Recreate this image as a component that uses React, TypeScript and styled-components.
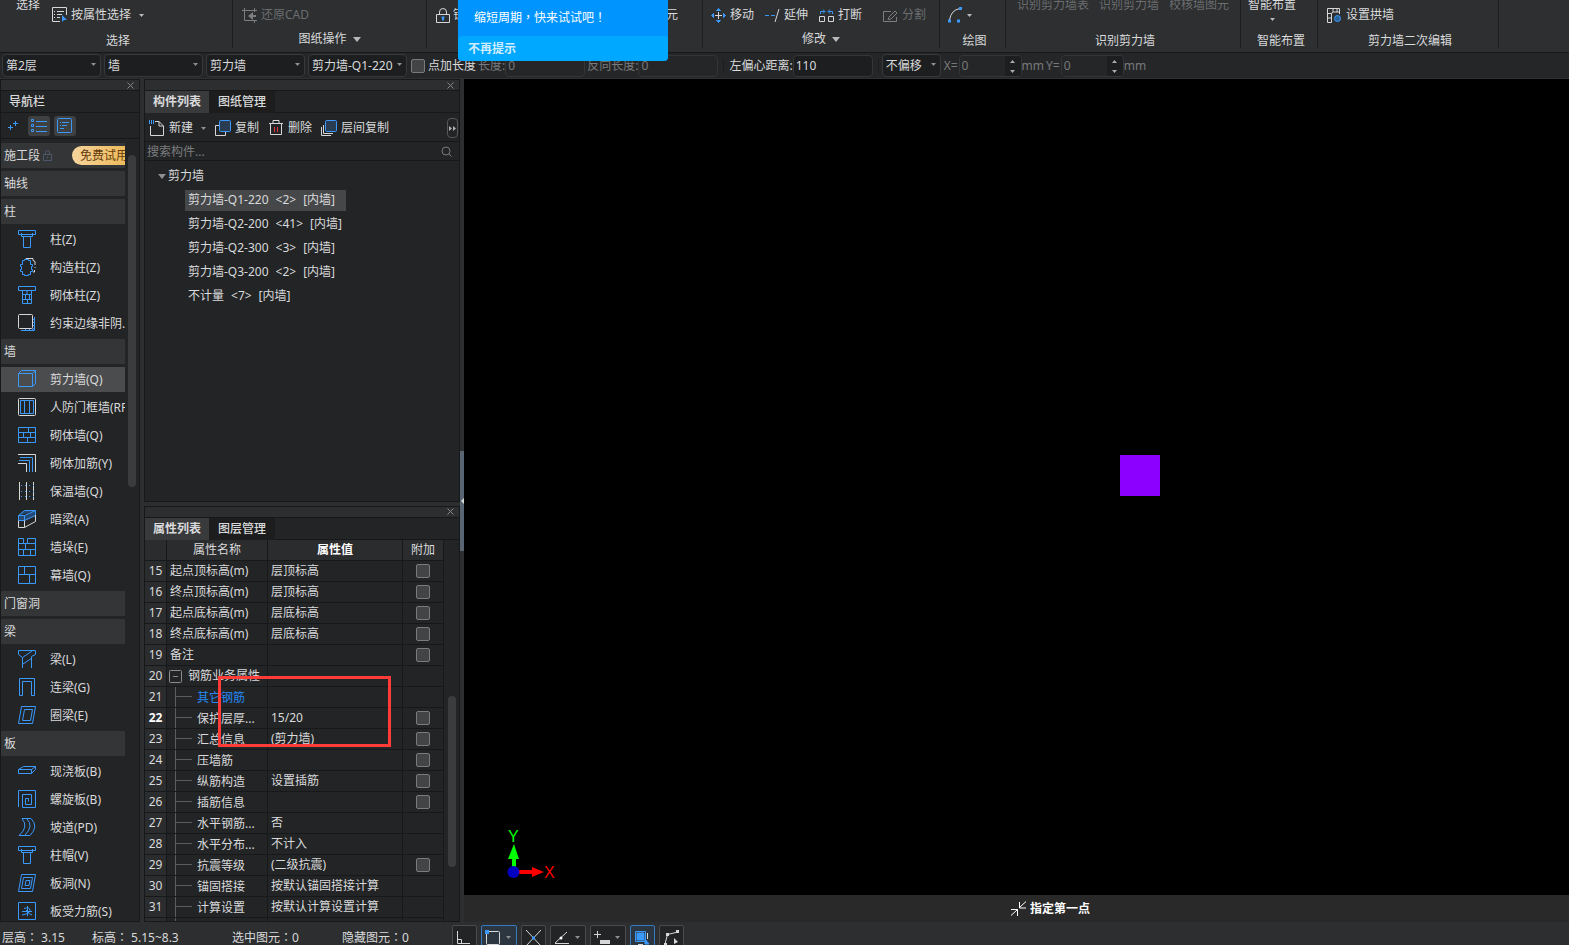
import React, { ReactNode } from 'react';
import styled, { createGlobalStyle } from 'styled-components';

const BLUE = '#3b99fc';
const LIGHT = '#d6d7d8';
const EDGE = '#17181a';

const GlobalStyle = createGlobalStyle`
  * { box-sizing: border-box; }
  body {
    margin: 0;
    background: #2d2e30;
    color: #d9dadb;
    font: 12px/18px 'Noto Sans', 'Noto Sans CJK SC', sans-serif;
    overflow: hidden;
  }
  button, input, select { font: inherit; color: inherit; margin: 0; }
  button { background: none; border: 0; padding: 0; display: flex; align-items: center; white-space: nowrap; }
  svg { display: block; flex: none; }
`;

const Page = styled.div`
  position: relative;
  display: flex;
  flex-direction: column;
  height: 100vh;
  overflow: hidden;
`;

/* Ribbon */
const Ribbon = styled.header`
  display: flex;
  align-items: flex-end;
  height: 52px;
  flex: none;
  overflow: hidden;
  background: #2d2f31;
`;
const Group = styled.section<{ $width: number }>`
  width: ${p => p.$width}px;
  flex: none;
  height: 52px;
  padding-bottom: 4px;
  display: flex;
  flex-direction: column;
  align-items: stretch;
  justify-content: flex-end;
`;
const GroupInner = styled.div`
  height: 48px;
  border-right: 1px solid #1d1e20;
  display: flex;
  flex-direction: column;
  justify-content: flex-end;
`;
const GroupBody = styled.div<{ $start?: number; $gap?: number; $center?: boolean }>`
  display: flex;
  flex: 1;
  align-items: flex-end;
  justify-content: ${p => (p.$center ? 'center' : 'flex-start')};
  gap: ${p => p.$gap ?? 10}px;
  padding-left: ${p => p.$start ?? 0}px;
  height: 28px;
`;
const Caption = styled.div<{ $menu?: boolean }>`
  display: flex;
  justify-content: center;
  align-items: center;
  gap: 6px;
  height: 18px;
  flex: none;
  padding-left: ${p => (p.$menu ? 0 : 4)}px;
  margin: ${p => (p.$menu ? '6px 0 0' : '8px 0 -2px')};
`;
const Tool = styled.button<{ $dim?: boolean; $gap?: number }>`
  gap: ${p => p.$gap ?? 4}px;
  height: 18px;
  color: ${p => (p.$dim ? '#6b6d6f' : 'inherit')};
`;
const TallTool = styled.button<{ $dim?: boolean }>`
  flex-direction: column;
  height: 28px;
  justify-content: flex-start;
  gap: 4px;
  line-height: 18px;
  color: ${p => (p.$dim ? '#6b6d6f' : 'inherit')};
`;

const Toast = styled.aside`
  position: absolute;
  z-index: 5;
  left: 458px;
  top: 0;
  width: 210px;
  border-radius: 0 0 4px 4px;
  overflow: hidden;
  background: #0094ff;
  color: #fff;
  p { margin: 0; padding: 9px 16px; font-family: 'Noto Sans', 'Noto Sans CJK TC', sans-serif; }
  button {
    width: 100%;
    height: 25px;
    padding-left: 10px;
    background: #00a8ff;
    border-radius: 4px;
    font-weight: 700;
    color: #cfecff;
  }
`;

/* Option bar */
const Options = styled.div`
  display: flex;
  align-items: center;
  height: 27px;
  flex: none;
  padding-left: 2px;
  background: #252628;
  border-top: 1px solid ${EDGE};
  border-bottom: 1px solid #303134;
  white-space: nowrap;
`;
const Picker = styled.div<{ $width: number }>`
  position: relative;
  width: ${p => p.$width}px;
  height: 23px;
  margin-right: 3px;
  select {
    appearance: none;
    width: 100%;
    height: 23px;
    padding: 0 11px 0 3px;
    border: 1px solid #38393b;
    border-radius: 4px;
    background: #1d1e20;
  }
  svg { position: absolute; right: 5px; top: 9px; }
`;
const Check = styled.input`
  appearance: none;
  width: 14px;
  height: 14px;
  flex: none;
  border: 1px solid #7a7b7d;
  border-radius: 2px;
  background: #434446;
  display: block;
`;
const CheckLabel = styled.label`
  display: flex;
  align-items: center;
  gap: 3px;
  margin: 0 2px 0 1px;
`;
const Field = styled.label<{ $dim?: boolean; $end?: number }>`
  display: flex;
  align-items: center;
  margin-right: ${p => p.$end ?? 2}px;
  color: ${p => (p.$dim ? '#77797b' : 'inherit')};
  input {
    width: 80px;
    height: 22px;
    padding: 0 2px;
    border: 1px solid #343537;
    border-radius: 4px;
    background: ${p => (p.$dim ? '#252628' : '#1d1e20')};
  }
`;
const Spin = styled.span`
  display: flex;
  height: 22px;
  width: 63px;
  margin-left: 1px;
  border: 1px solid #343537;
  border-radius: 4px;
  overflow: hidden;
  && input { width: 45px; height: 20px; padding: 0 2px; border: 0; border-radius: 0; }
  svg { background: #1d1e20; }
`;
const Rule = styled.i<{ $end: number }>`
  width: 1px;
  height: 14px;
  margin: 0 ${p => p.$end}px 0 3px;
  background: #1d1e20;
`;

/* Work area */
const Main = styled.main`
  display: flex;
  flex: 1;
  min-height: 0;
`;
const Panel = styled.section<{ $grow?: number }>`
  position: relative;
  display: flex;
  flex-direction: column;
  flex: ${p => (p.$grow ? `${p.$grow} 1 0` : 'none')};
  min-height: 0;
  overflow: hidden;
  background: #232426;
  border: 1px solid ${EDGE};
`;
const Strip = styled.div`
  display: flex;
  justify-content: flex-end;
  align-items: center;
  height: 11px;
  flex: none;
  padding-right: 4px;
  background: #2d2e30;
  border-bottom: 1px solid ${EDGE};
`;
const NavPanel = styled(Panel)`
  width: 140px;
  height: 100%;
`;
const NavTitle = styled.h2`
  margin: 0;
  height: 22px;
  flex: none;
  padding: 2px 8px 1px;
  font-size: 12px;
  font-weight: 500;
  border-bottom: 1px solid ${EDGE};
`;
const NavTools = styled.div`
  display: flex;
  align-items: center;
  gap: 4px;
  height: 26px;
  flex: none;
  padding-left: 1px;
  border-bottom: 1px solid ${EDGE};
`;
const NavTool = styled.button<{ $on?: boolean }>`
  width: 22px;
  height: 20px;
  justify-content: center;
  border-radius: 3px;
  background: ${p => (p.$on ? '#3f4042' : 'transparent')};
`;
const NavBody = styled.div`
  display: flex;
  flex: 1;
  min-height: 0;
  gap: 3px;
  padding-top: 4px;
`;
const NavList = styled.div`
  width: 124px;
  display: flex;
  flex-direction: column;
  gap: 3px;
  overflow: hidden;
`;
const NavHead = styled.button`
  height: 25px;
  flex: none;
  padding-left: 3px;
  gap: 3px;
  background: #343537;
`;
const Trial = styled.span`
  margin-left: auto;
  height: 19px;
  width: 53px;
  padding: 1px 0 0 8px;
  border-radius: 10px 0 0 10px;
  overflow: hidden;
  background: linear-gradient(90deg, #f5d49d, #eebb5c);
  color: #663c0c;
`;
const NavItem = styled.button<{ $on?: boolean }>`
  height: 25px;
  flex: none;
  padding-left: 17px;
  gap: 14px;
  overflow: hidden;
  background: ${p => (p.$on ? '#4b4c4e' : 'transparent')};
  svg { margin-bottom: 1px; }
`;
const Thumb = styled.div<{ $top: number; $height: number }>`
  width: 8px;
  height: ${p => p.$height}px;
  margin-top: ${p => p.$top}px;
  flex: none;
  border-radius: 4px;
  background: #3b3c3e;
`;

const Dock = styled.div`
  display: flex;
  flex-direction: column;
  gap: 4px;
  width: 316px;
  margin-left: 4px;
  flex: none;
`;
const Tabs = styled.div`
  display: flex;
  height: 22px;
  flex: none;
  border-bottom: 1px solid ${EDGE};
`;
const Tab = styled.button<{ $on?: boolean }>`
  height: 22px;
  width: ${p => (p.$on ? 64 : 66)}px;
  justify-content: center;
  font-weight: ${p => (p.$on ? 700 : 500)};
  background: ${p => (p.$on ? '#393a3c' : '#1d1d1d')};
`;
const PartTools = styled.div`
  display: flex;
  align-items: center;
  height: 29px;
  flex: none;
  gap: 9px;
  padding: 2px 0 0 4px;
  border-bottom: 1px solid ${EDGE};
`;
const More = styled.button`
  width: 11px;
  height: 20px;
  margin-left: auto;
  margin-right: 1px;
  justify-content: center;
  border: 1px solid #55575a;
  border-radius: 4px;
`;
const Search = styled.label`
  display: flex;
  align-items: center;
  height: 19px;
  flex: none;
  padding-right: 7px;
  border-bottom: 1px solid ${EDGE};
  input {
    flex: 1;
    min-width: 0;
    height: 18px;
    padding: 1px 2px 0;
    border: 0;
    background: transparent;
  }
  input::placeholder { color: #7b7d7f; opacity: 1; }
`;
const Tree = styled.ul`
  list-style: none;
  margin: 0;
  padding: 3px 0 0 13px;
  li { height: 24px; display: flex; align-items: center; gap: 2px; }
`;
const Part = styled.button<{ $on?: boolean }>`
  margin-left: 27px;
  height: 21px;
  padding: 0 11px 0 3px;
  gap: 7px;
  background: ${p => (p.$on ? '#464749' : 'transparent')};
`;

/* Property table */
const PropBody = styled.div`
  display: flex;
  flex: 1;
  min-height: 0;
  gap: 4px;
  overflow: hidden;
`;
const Table = styled.table`
  border-collapse: separate;
  border-spacing: 0;
  table-layout: fixed;
  width: 299px;
  height: max-content;
  th, td {
    height: 21px;
    padding: 1px 0 0 3px;
    line-height: 18px;
    border-right: 1px solid ${EDGE};
    border-bottom: 1px solid ${EDGE};
    white-space: nowrap;
    overflow: hidden;
    text-align: left;
    font-weight: 400;
  }
  td:last-child { padding: 0; }
  thead th { padding: 1px 0 0; background: #2b2c2e; text-align: center; }
  strong { color: #fff; }
`;
const RowNo = styled.th<{ $on?: boolean }>`
  && { padding: 1px 0 0; background: #2b2c2e; text-align: center; font-weight: ${p => (p.$on ? 700 : 400)}; color: ${p => (p.$on ? '#fff' : 'inherit')}; }
`;
const BranchCell = styled.td`
  && { padding-top: 0; }
`;
const Branch = styled.div<{ $blue?: boolean }>`
  display: flex;
  align-items: center;
  height: 20px;
  margin-left: 5px;
  gap: 5px;
  border-left: 1px solid #5b5d5f;
  color: ${p => (p.$blue ? '#2489f5' : 'inherit')};
  &::before { content: ''; width: 16px; height: 1px; background: #5b5d5f; }
  span { padding-top: 2px; }
`;
const Root = styled.div`
  display: flex;
  align-items: center;
  gap: 6px;
  margin-left: -1px;
`;
const Center = styled.div`
  display: flex;
  justify-content: center;
`;
const RedFrame = styled.div`
  position: absolute;
  left: 73px;
  top: 169px;
  width: 173px;
  height: 71px;
  border: 3px solid #ff3b38;
`;

const Splitter = styled.div`
  display: flex;
  align-items: center;
  width: 4px;
  flex: none;
  span { display: flex; align-items: center; width: 4px; height: 100px; background: #596572; }
`;
const View = styled.section`
  display: flex;
  flex-direction: column;
  flex: 1;
  min-width: 0;
`;
const Canvas = styled.div`
  position: relative;
  flex: 1;
  background: #000;
  overflow: hidden;
`;
const Column = styled.div`
  position: absolute;
  left: 656px;
  top: 376px;
  width: 40px;
  height: 41px;
  background: #8c00ff;
`;
const Axes = styled.svg`
  position: absolute;
  left: 36px;
  bottom: 0;
`;
const Hint = styled.div`
  display: flex;
  align-items: center;
  justify-content: center;
  gap: 4px;
  height: 27px;
  padding-left: 68px;
  background: #292929;
  font-weight: 700;
  color: #fff;
`;

/* Status bar */
const Status = styled.footer`
  display: flex;
  align-items: flex-start;
  height: 23px;
  flex: none;
  padding-top: 3px;
  overflow: hidden;
`;
const Facts = styled.div`
  display: grid;
  grid-template-columns: 90px 140px 110px 110px;
  padding: 4px 0 0 2px;
  white-space: pre;
  font-family: 'Noto Sans', 'Noto Sans CJK TC', sans-serif;
`;
const Snaps = styled.div`
  display: flex;
  gap: 4px;
`;
const Snap = styled.button<{ $on?: boolean; $wide?: boolean }>`
  width: ${p => (p.$wide ? 36 : 25)}px;
  height: 25px;
  padding-left: 3px;
  gap: 5px;
  border: 1px solid ${p => (p.$on ? '#3579c0' : '#4a4b4d')};
  border-radius: 2px;
  background: ${p => (p.$on ? '#2c3640' : '#232426')};
`;

const Caret = ({ small, color = '#b9babb' }: { small?: boolean; color?: string }) => (
  <svg width={small ? 5 : 8} height={small ? 3 : 5} viewBox={small ? '0 0 5 3' : '0 0 8 5'}>
    <path d={small ? 'M0 0h5L2.500 3z' : 'M0 0h8L4 5z'} fill={color} />
  </svg>
);
const Close = () => (
  <svg width="8" height="7" viewBox="0 0 8 7"><path d="M.5.5l6 6M6.5.5l-6 6" stroke="#85878a" /></svg>
);
const Draw = ({ children, w = 18, h = 18 }: { children: ReactNode; w?: number; h?: number }) => (
  <svg width={w} height={h} viewBox={`0 0 ${w} ${h}`} fill="none" stroke={BLUE}>{children}</svg>
);

const icons: Record<string, ReactNode> = {
  column: <path d="M.5.5h17v4H.5zM3.5 3v3.5h11V3M5.5 6.5v11h7v-11" />,
  tieColumn: <><path d="M8 1.500V.5h7v2l2 1v3.500M17 9v1M16.500 12v2H15" stroke={LIGHT} /><path d="M4.500 2.500h2v-1h4v1h2v4h2v2h-1v3h1v2h-2v3h-2v1h-4v-1h-2v-3h-2v-2h1v-3h-1v-2h2z" /></>,
  brickColumn: <path d="M.5.5h17v4H.5zM4.500 4.500v13h9v-13M4.500 8.500h9M4.500 13.500h9M9 5v3.500M7.500 9v4.500M11.500 9v4.500M9.500 14v3.500" />,
  edge: <><path d="M16.500 3v13.500H3M15 6l2-2M15 9l2-2M15 12l2-2M14 16l3-3M10 17l2-2M6 17l2-2" /><rect x=".5" y=".5" width="14" height="14" rx="1" stroke={LIGHT} fill="#232426" /></>,
  shear: <path d="M.5 3.500h14v13H.5zM.5 3.500l3-3h14v13l-3 3M14.500 3.500l3-3" />,
  guard: <><rect x=".5" y=".5" width="17" height="17" rx="1" stroke={LIGHT} /><path d="M2.500 2.500h13v13h-13zM6.500 3v12M11.500 3v12" /></>,
  brick: <path d="M.5 1.500h17v15H.5zM.5 6.500h17M.5 11.500h17M10.500 2v4.500M5.500 7v4.500M12.500 7v4.500M9.500 12v4" />,
  rebar: <><path d="M0 .5h17.500V18M0 9.500h8.500V18" stroke={LIGHT} /><path d="M2 3.500h12.500V18M1 6.500h10.500V18" /></>,
  insulate: <><path d="M1.500 0v18M8.500 0v18M15.500 0v18" stroke={LIGHT} /><path d="M3 3.500h13M3 9.500h13M3 14.500h13" strokeDasharray="1 3" /></>,
  hidden: <><path d="M.5 5.500l6-5h11v5l-11 5h-6zM.5 5.500h6l11-5M6.500 5.500v5" fill="#244a73" /><path d="M.5 10.500v7h6v-7M6.500 17.500l11-6V5" stroke={LIGHT} /></>,
  pier: <path d="M.5.5h5v5h4v-5h8v17H.5zM.5 5.500h17M.5 11.500h17M7.500 6v5.500M12.500 12v5.500M5.500 12v5.500" />,
  curtain: <path d="M.5.5h17v17H.5zM.5 8.500h17M6.500.500v8M11.500 8.500v9" />,
  beam: <path d="M.5.5h17v4l-4 2V18M.5.5v4l4 3V18M4.500 7.500L14 1M5 14l9-6" />,
  link: <path d="M1.500 17.500V.5h15v17h-3v-14h-9v14z" />,
  ring: <path d="M3.500.5h14l-3 17H.5zM6.500 3.500h8l-2 11h-8z" />,
  slab: <path d="M.5 7.500l5-3h12v3l-4 4H.5zM.5 7.500h13v4M13.500 7.500l4-3" />,
  spiral: <path d="M.5 17V.5h17v17h-13v-13h9v10h-6v-6h3v3" />,
  ramp: <path d="M4 .5h9q8 8-1 17H1Q11 9 4 .5zM9 1q7 7-2 16" />,
  hole: <path d="M3.500.5h14l-3 17H.5zM5.500 3.500h9l-2 11h-9zM8 6.500h4l-1 5H7z" />,
  stress: <path d="M.5.5h17v17H.5zM9.500 4v10M6 6.500q6-2 6 2 0 3-8 4.500M4 9.500h10M8 8q4 5 6 5" />,
};

const nav: [string, string?][] = [
  ['轴线'], ['柱'],
  ['柱(Z)', 'column'], ['构造柱(Z)', 'tieColumn'], ['砌体柱(Z)', 'brickColumn'], ['约束边缘非阴...', 'edge'],
  ['墙'],
  ['剪力墙(Q)', 'shear'], ['人防门框墙(RF', 'guard'], ['砌体墙(Q)', 'brick'], ['砌体加筋(Y)', 'rebar'],
  ['保温墙(Q)', 'insulate'], ['暗梁(A)', 'hidden'], ['墙垛(E)', 'pier'], ['幕墙(Q)', 'curtain'],
  ['门窗洞'], ['梁'],
  ['梁(L)', 'beam'], ['连梁(G)', 'link'], ['圈梁(E)', 'ring'],
  ['板'],
  ['现浇板(B)', 'slab'], ['螺旋板(B)', 'spiral'], ['坡道(PD)', 'ramp'], ['柱帽(V)', 'column'], ['板洞(N)', 'hole'], ['板受力筋(S)', 'stress'],
];

const parts = [
  ['剪力墙-Q1-220', '<2>'], ['剪力墙-Q2-200', '<41>'], ['剪力墙-Q2-300', '<3>'], ['剪力墙-Q3-200', '<2>'], ['不计量', '<7>'],
];

type Prop = { no: number; name: string; value?: string; check?: boolean };
const props: Prop[] = [
  { no: 15, name: '起点顶标高(m)', value: '层顶标高', check: true },
  { no: 16, name: '终点顶标高(m)', value: '层顶标高', check: true },
  { no: 17, name: '起点底标高(m)', value: '层底标高', check: true },
  { no: 18, name: '终点底标高(m)', value: '层底标高', check: true },
  { no: 19, name: '备注', check: true },
  { no: 20, name: '钢筋业务属性' },
  { no: 21, name: '其它钢筋' },
  { no: 22, name: '保护层厚...', value: '15/20', check: true },
  { no: 23, name: '汇总信息', value: '(剪力墙)', check: true },
  { no: 24, name: '压墙筋', check: true },
  { no: 25, name: '纵筋构造', value: '设置插筋', check: true },
  { no: 26, name: '插筋信息', check: true },
  { no: 27, name: '水平钢筋...', value: '否' },
  { no: 28, name: '水平分布...', value: '不计入' },
  { no: 29, name: '抗震等级', value: '(二级抗震)', check: true },
  { no: 30, name: '锚固搭接', value: '按默认锚固搭接计算' },
  { no: 31, name: '计算设置', value: '按默认计算设置计算' },
];

const RibbonGroup = ({ width, caption, menu, children }: { width: number; caption?: string; menu?: boolean; children?: ReactNode }) => (
  <Group $width={width}>
    <GroupInner>
      {children}
      <Caption $menu={menu}>{caption}{menu && <Caret />}</Caption>
    </GroupInner>
  </Group>
);

const Choice = ({ width, value, label }: { width: number; value: string; label: string }) => (
  <Picker $width={width}>
    <select aria-label={label}><option>{value}</option></select>
    <Caret small color="#8d8f91" />
  </Picker>
);

const Spinner = ({ label }: { label: string }) => (
  <Field $dim>
    {label}
    <Spin>
      <input defaultValue="0" />
      <svg width="16" height="20" viewBox="0 0 16 20"><path d="M5 7h5L7.500 4zM5 14h5l-2.500 3z" fill="#a9abad" /></svg>
    </Spin>
    mm
  </Field>
);

export default function App() {
  return (
    <Page>
      <GlobalStyle />
      <Ribbon>
        <RibbonGroup width={233} caption="选择">
          <GroupBody $start={16} $gap={12}>
            <TallTool>选择</TallTool>
            <Tool>
              <Draw w={15} h={16}>
                <path d="M8 14.500H.5V.5h14V8M2 4.500h1M5 4.500h7M2 7.500h1M5 7.500h5M2 10.500h1M5 10.500h3" stroke={LIGHT} />
                <path d="M10 8l5 5h-3l-2 2z" fill={BLUE} stroke="none" />
              </Draw>
              按属性选择<span /><Caret small />
            </Tool>
          </GroupBody>
        </RibbonGroup>
        <RibbonGroup width={194} caption="图纸操作" menu>
          <GroupBody $start={9}>
            <Tool $dim>
              <Draw w={15} h={15}><g stroke="#7c7e80"><path d="M0 2.500h15M2.500 0v12.500H15M12.500 0v4M12.500 12v3" /><path d="M6 8l5-4v3h3v2h-3v3z" fill="#7c7e80" stroke="none" /></g></Draw>
              还原CAD
            </Tool>
          </GroupBody>
        </RibbonGroup>
        <RibbonGroup width={276}>
          <GroupBody $start={9} $gap={189}>
            <Tool $gap={3}>
              <Draw w={14} h={15}><path d="M.5 6.500h13v8H.5zM3.500 6V4q0-3.500 3.500-3.500T10.500 4v2" stroke={LIGHT} /><path d="M7 8.500v4M5.500 9.500h3" strokeWidth="2" /></Draw>
              锁定
            </Tool>
            <Tool>元</Tool>
          </GroupBody>
        </RibbonGroup>
        <RibbonGroup width={237} caption="修改" menu>
          <GroupBody $start={8} $gap={11}>
            <Tool>
              <Draw w={15} h={15}><path d="M7.500 4v7M4 7.500h7" stroke={LIGHT} /><path d="M5.500 2.500l2-2 2 2zM5.500 12.500l2 2 2-2zM2.500 5.500l-2 2 2 2zM12.500 5.500l2 2-2 2z" fill={BLUE} /></Draw>
              移动
            </Tool>
            <Tool>
              <Draw w={15} h={15}><path d="M0 7.500h4M6 7.500h4" /><path d="M10 14l4-13" stroke={LIGHT} /></Draw>
              延伸
            </Tool>
            <Tool>
              <Draw w={15} h={15}><path d="M.5 8.500h5v5h-5zM9.500 8.500h5v5h-5z" stroke={LIGHT} /><path d="M1.500 6V3.500h4M4 1.500l2 2-2 2M13.500 6V3.500h-4M11 1.500l-2 2 2 2" /></Draw>
              打断
            </Tool>
            <Tool $dim>
              <Draw w={25} h={15}><path d="M18 3.500h-7.500v10h13V9M16 9l6-6 2 2-6 6-3 .5z" stroke="#7c7e80" /></Draw>
              分割
            </Tool>
          </GroupBody>
        </RibbonGroup>
        <RibbonGroup width={66} caption="绘图">
          <GroupBody $start={8}>
            <Tool>
              <Draw w={15} h={16}><path d="M1.500 13Q3 3 12 1.500" stroke={LIGHT} /><path d="M0 12.500h3v3H0zM9 12.500h3v3H9zM11 0h3v3h-3z" fill={BLUE} stroke="none" /></Draw>
              <Caret small />
            </Tool>
          </GroupBody>
        </RibbonGroup>
        <RibbonGroup width={235} caption="识别剪力墙">
          <GroupBody $center>
            <TallTool $dim>识别剪力墙表</TallTool>
            <TallTool $dim>识别剪力墙</TallTool>
            <TallTool $dim>校核墙图元</TallTool>
          </GroupBody>
        </RibbonGroup>
        <RibbonGroup width={77} caption="智能布置">
          <GroupBody $start={7}><TallTool>智能布置<Caret small /></TallTool></GroupBody>
        </RibbonGroup>
        <RibbonGroup width={181} caption="剪力墙二次编辑">
          <GroupBody $start={9}>
            <Tool $gap={5}>
              <Draw w={14} h={15}><path d="M.5 14.500V.5h12V6M4.500 14.500V6q0-2 2-2h6M.5 14.500h4M1 5.500h3M1 10h3M6 1v3M10 1v3" stroke={LIGHT} /><circle cx="10.500" cy="10.500" r="3" fill="#28629c" /></Draw>
              设置拱墙
            </Tool>
          </GroupBody>
        </RibbonGroup>
      </Ribbon>

      <Toast>
        <p>缩短周期，快来试试吧！</p>
        <button>不再提示</button>
      </Toast>

      <Options>
        <Choice width={99} value="第2层" label="楼层" />
        <Choice width={99} value="墙" label="类别" />
        <Choice width={99} value="剪力墙" label="类型" />
        <Choice width={99} value="剪力墙-Q1-220" label="构件" />
        <CheckLabel><Check type="checkbox" />点加长度</CheckLabel>
        <Field $dim>长度:<input defaultValue="0" /></Field>
        <Field $dim>反向长度:<input defaultValue="0" /></Field>
        <Rule $end={5} />
        <Field>左偏心距离:<input defaultValue="110" /></Field>
        <Rule $end={3} />
        <Choice width={59} value="不偏移" label="偏移" />
        <Spinner label="X=" />
        <Spinner label="Y=" />
      </Options>

      <Main>
        <NavPanel>
          <Strip><Close /></Strip>
          <NavTitle>导航栏</NavTitle>
          <NavTools>
            <NavTool aria-label="添加"><Draw w={10} h={10}><path d="M0 6.500h5M2.500 4v5M5 2.500h5M7.500 0v5" /></Draw></NavTool>
            <NavTool $on aria-label="列表"><Draw w={16} h={14}><path d="M.5.5h2v2h-2zM.5 5.500h2v2h-2zM.5 10.500h2v2h-2zM5 2.500h11M5 7.500h11M5 12.500h11" /></Draw></NavTool>
            <NavTool $on aria-label="卡片"><Draw w={16} h={16}><rect x=".5" y=".5" width="14" height="14" rx="1" /><path d="M3 4.500h1M5 4.500h7M3 7.500h1M5 7.500h5M3 10.500h4" /></Draw></NavTool>
          </NavTools>
          <NavBody>
            <NavList>
              <NavHead>
                施工段
                <Draw w={9} h={11}><path d="M.5 4.500h8v6h-8zM2.500 4V2.500q0-2 2-2t2 2V4M4.500 6.500v2" stroke="#4c596b" /></Draw>
                <Trial>免费试用</Trial>
              </NavHead>
              {nav.map(([text, icon]) => icon
                ? <NavItem key={text} $on={icon === 'shear'}><Draw>{icons[icon]}</Draw>{text}</NavItem>
                : <NavHead key={text}>{text}</NavHead>)}
            </NavList>
            <Thumb $top={12} $height={332} />
          </NavBody>
        </NavPanel>

        <Dock>
          <Panel $grow={423}>
            <Strip><Close /></Strip>
            <Tabs><Tab $on>构件列表</Tab><Tab>图纸管理</Tab></Tabs>
            <PartTools>
              <Tool>
                <Draw w={16} h={16}><path d="M1.500 6v9.500h13V6L10 1.500H6M10 1.500V6h4" stroke={LIGHT} /><path d="M0 1h5M0 3h5" strokeWidth="2" strokeDasharray="1 1" /></Draw>
                新建<span /><Caret small color="#8d8f91" />
              </Tool>
              <Tool>
                <Draw w={16} h={16}><path d="M4 5.500H.5v10h10V12" stroke={LIGHT} /><rect x="4.500" y=".5" width="11" height="11" rx="1" fill="#293c52" /></Draw>
                复制
              </Tool>
              <Tool>
                <Draw w={16} h={16}><path d="M1 3.500h14M5 3V.5h6V3M2.500 4v10.500h11V4" stroke={LIGHT} /><path d="M6.500 7v5M9.500 7v5" stroke="#e8343c" /></Draw>
                删除
              </Tool>
              <Tool>
                <Draw w={16} h={16}><path d="M.5 7v8.500H10M2.500 5v8.500H12" stroke={LIGHT} /><rect x="4.500" y=".5" width="11" height="11" rx="1" fill="#293c52" /></Draw>
                层间复制
              </Tool>
              <More aria-label="更多"><svg width="7" height="5" viewBox="0 0 7 5"><path d="M0 0l3 2.500L0 5zM4 0l3 2.500L4 5z" fill="#b0b2b4" /></svg></More>
            </PartTools>
            <Search>
              <input aria-label="搜索构件" placeholder="搜索构件..." />
              <svg width="11" height="11" viewBox="0 0 11 11" fill="none" stroke="#77797b"><circle cx="5" cy="5" r="4" /><path d="M8 8l2.500 2.500" /></svg>
            </Search>
            <Tree>
              <li><Caret color="#8d8f91" />剪力墙</li>
              {parts.map(([name, count], i) => (
                <li key={name}><Part $on={i === 0}><span>{name}</span><span>{count}</span><span>[内墙]</span></Part></li>
              ))}
            </Tree>
          </Panel>

          <Panel $grow={416}>
            <Strip><Close /></Strip>
            <Tabs><Tab $on>属性列表</Tab><Tab>图层管理</Tab></Tabs>
            <PropBody>
              <Table>
                <colgroup><col style={{ width: 22 }} /><col style={{ width: 101 }} /><col style={{ width: 135 }} /><col style={{ width: 41 }} /></colgroup>
                <thead><tr><th /><th>属性名称</th><th><strong>属性值</strong></th><th>附加</th></tr></thead>
                <tbody>
                  {props.map(p => (
                    <tr key={p.no}>
                      <RowNo $on={p.no === 22}>{p.no}</RowNo>
                      {p.no > 20
                        ? <BranchCell><Branch $blue={p.no === 21}><span>{p.name}</span></Branch></BranchCell>
                        : <td>{p.no === 20
                          ? <Root><svg width="13" height="13" viewBox="0 0 13 13" fill="none" stroke="#8a8c8e"><rect x=".5" y=".5" width="12" height="12" rx="1" /><path d="M4 6.500h5" /></svg>{p.name}</Root>
                          : p.name}</td>}
                      <td>{p.value}</td>
                      <td>{p.check && <Center><Check type="checkbox" aria-label={p.name} /></Center>}</td>
                    </tr>
                  ))}
                  <tr><RowNo /><BranchCell><Branch /></BranchCell><td /><td /></tr>
                </tbody>
              </Table>
              <Thumb $top={156} $height={171} />
            </PropBody>
            <RedFrame />
          </Panel>
        </Dock>

        <Splitter><span><svg width="4" height="6" viewBox="0 0 4 6"><path d="M4 0v6L1 3z" fill="#d6d7d8" /></svg></span></Splitter>

        <View>
          <Canvas>
            <Column />
            <Axes width="60" height="68" viewBox="0 -8 60 68">
              <path d="M12 18h4v20h-4zM8 24L14 9l5 15z" fill="#0f0" />
              <path d="M18 35h14v4H18zM32 32l12 5-12 5z" fill="#f00" />
              <circle cx="13.500" cy="37" r="6" fill="#0000c0" />
              <text x="8" y="7" fill="#0f0" fontFamily="Liberation Sans, sans-serif" fontSize="16">Y</text>
              <text x="44" y="43" fill="#f00" fontFamily="Liberation Sans, sans-serif" fontSize="16">X</text>
            </Axes>
          </Canvas>
          <Hint>
            <Draw w={15} h={15}><path d="M15 .5L8.500 6.500M8.500 1v6H15M0 14.500l6.500-6M0 8.500h6.500V15" stroke="#fff" /></Draw>
            指定第一点
          </Hint>
        </View>
      </Main>

      <Status>
        <Facts><span>层高： 3.15</span><span>标高： 5.15~8.3</span><span>选中图元：0</span><span>隐藏图元：0</span></Facts>
        <Snaps>
          <Snap aria-label="正交"><Draw w={15} h={15}><path d="M1.500 1v12.500H14M1.500 9.500h4v4" stroke={LIGHT} /></Draw></Snap>
          <Snap $on $wide aria-label="捕捉"><Draw w={16} h={16}><rect x="1.500" y="1.500" width="13" height="13" rx="1" stroke={LIGHT} /><path d="M0 0h4v4H0z" fill={BLUE} stroke="none" /></Draw><Caret small color="#8d8f91" /></Snap>
          <Snap aria-label="交点"><Draw w={17} h={16}><path d="M1 0l15 16M16 0L1 16" stroke={LIGHT} /><path d="M7 6.500h3v3H7z" fill={BLUE} stroke="none" /></Draw></Snap>
          <Snap $wide aria-label="角度"><Draw w={16} h={16}><path d="M1 13L13 2M1 13.500h14" stroke={LIGHT} /><circle cx="7" cy="8" r="1.500" fill="#fff" stroke="none" /></Draw><Caret small color="#8d8f91" /></Snap>
          <Snap $wide aria-label="动态输入"><Draw w={16} h={16}><path d="M0 4.500h7M3.500 1v7" stroke={LIGHT} /><path d="M6 10h10v4H6z" fill={LIGHT} stroke="none" /></Draw><Caret small color="#8d8f91" /></Snap>
          <Snap $on aria-label="选择"><Draw w={16} h={16}><path d="M1.500 1.500h10v10h-10z" /><path d="M3 3h7v7H3z" fill={BLUE} /><path d="M13.500 3v6M4 14.500h5" stroke={LIGHT} /><path d="M11 9l4 5h-4z" fill={BLUE} /></Draw></Snap>
          <Snap aria-label="折线"><Draw w={17} h={16}><path d="M2 14L4.500 4.500 15 2" stroke={LIGHT} /><path d="M1 13h3v3H1zM3 3h3v3H3zM13 0h3v3h-3zM11 8l4 4-4 2z" fill={LIGHT} stroke="none" /></Draw></Snap>
        </Snaps>
      </Status>
    </Page>
  );
}
